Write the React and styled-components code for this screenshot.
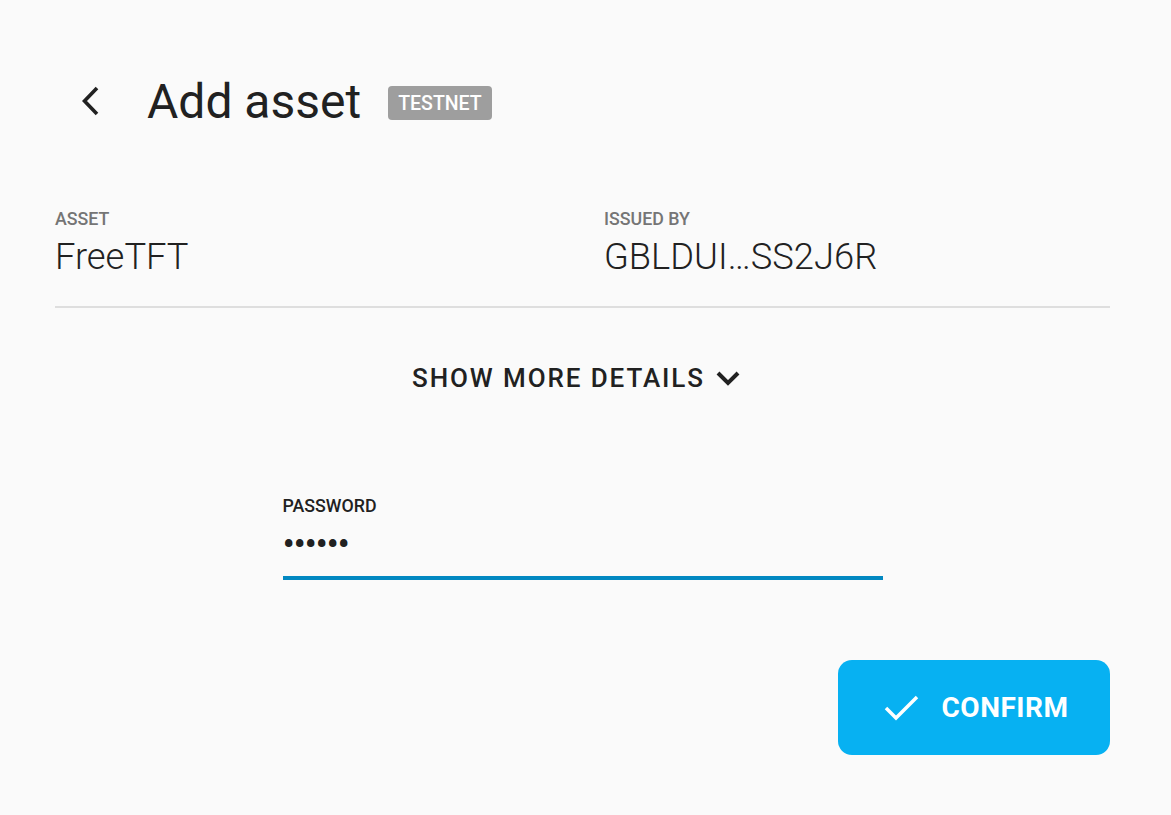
import React from "react";
import styled, { createGlobalStyle } from "styled-components";

const Global = createGlobalStyle`
  html, body { margin: 0; padding: 0; background: #fafafa; }
  body { font-family: Roboto, "Noto Sans", sans-serif; color: #212121; }
`;

const Page = styled.div`
  width: 1171px;
  height: 815px;
  box-sizing: border-box;
  padding: 70px 61px 0 55px;
  background: #fafafa;
`;

const Header = styled.div`
  display: flex;
  align-items: center;
  height: 62px;
`;

const BackButton = styled.button`
  border: 0;
  background: none;
  padding: 0;
  margin: 0 46px 0 24px;
  width: 22px;
  height: 32px;
  display: flex;
  align-items: center;
  justify-content: center;
  cursor: pointer;
`;

const Title = styled.h1`
  margin: 0;
  font-size: 48px;
  font-weight: 400;
  color: #212121;
  letter-spacing: 0;
`;

const Badge = styled.span`
  margin-left: 27px;
  margin-top: 4px;
  background: #9e9e9e;
  color: #fff;
  font-size: 19.5px;
  font-weight: 500;
  padding: 6px 10px 5px;
  border-radius: 4px;
  line-height: 23px;
`;

const Details = styled.div`
  display: grid;
  grid-template-columns: 549px 1fr;
  margin-top: 77px;
  padding-bottom: 28px;
  border-bottom: 2px solid #dedede;
`;

const Field = styled.div`
  display: flex;
  flex-direction: column;
`;

const Label = styled.div`
  font-size: 17.8px;
  font-weight: 500;
  color: #757575;
  line-height: 20px;
`;

const Value = styled.div`
  font-size: 36.3px;
  font-weight: 300;
  color: #212121;
  line-height: 42px;
  margin-top: 7px;
`;

const MoreRow = styled.div`
  display: flex;
  justify-content: center;
  margin-top: 55px;
`;

const MoreButton = styled.button`
  display: flex;
  align-items: center;
  gap: 10px;
  border: 0;
  background: none;
  padding: 0;
  font-family: inherit;
  font-size: 26px;
  font-weight: 500;
  color: #212121;
  letter-spacing: 1.9px;
  cursor: pointer;
  margin-right: 12px;
`;

const PasswordWrap = styled.div`
  width: 600px;
  margin: 103px auto 0;
  display: flex;
  flex-direction: column;
`;

const PasswordLabel = styled.label`
  font-size: 17.8px;
  font-weight: 500;
  color: #212121;
  line-height: 20px;
`;

const PasswordInput = styled.input`
  border: 0;
  border-bottom: 4px solid #0288c1;
  background: transparent;
  outline: none;
  font-family: Roboto, sans-serif;
  font-size: 37px;
  color: #212121;
  padding: 13px 0 17px;
  margin: 0;
  letter-spacing: -1.5px;
  line-height: 30px;
  height: 30px;
`;

const Actions = styled.div`
  display: flex;
  justify-content: flex-end;
  margin-top: 80px;
`;

const ConfirmButton = styled.button`
  width: 272px;
  height: 95px;
  border: 0;
  border-radius: 14px;
  background: #07b1f2;
  color: #fff;
  font-family: inherit;
  font-size: 28px;
  font-weight: 700;
  letter-spacing: 0.5px;
  display: flex;
  align-items: center;
  justify-content: center;
  gap: 22px;
  cursor: pointer;
  padding: 0 0 0 4px;
`;

export default function App() {
  return (
    <>
      <Global />
      <Page>
        <Header>
          <BackButton aria-label="Back">
            <svg width="22" height="32" viewBox="0 0 22 32">
              <path d="M18 3 L5.5 16 L18 29" fill="none" stroke="#212121" strokeWidth="3.6" />
            </svg>
          </BackButton>
          <Title>Add asset</Title>
          <Badge>TESTNET</Badge>
        </Header>
        <Details>
          <Field>
            <Label>ASSET</Label>
            <Value>FreeTFT</Value>
          </Field>
          <Field>
            <Label>ISSUED BY</Label>
            <Value>GBLDUI…SS2J6R</Value>
          </Field>
        </Details>
        <MoreRow>
          <MoreButton>
            SHOW MORE DETAILS
            <svg width="26" height="18" viewBox="0 0 26 18">
              <path d="M3 4 L13 14 L23 4" fill="none" stroke="#212121" strokeWidth="4" />
            </svg>
          </MoreButton>
        </MoreRow>
        <PasswordWrap>
          <PasswordLabel htmlFor="pw">PASSWORD</PasswordLabel>
          <PasswordInput id="pw" type="password" defaultValue="secret" />
        </PasswordWrap>
        <Actions>
          <ConfirmButton>
            <svg width="36" height="28" viewBox="0 0 36 28">
              <path d="M2 14 L12 24 L33 3" fill="none" stroke="#fff" strokeWidth="3.5" />
            </svg>
            CONFIRM
          </ConfirmButton>
        </Actions>
      </Page>
    </>
  );
}
